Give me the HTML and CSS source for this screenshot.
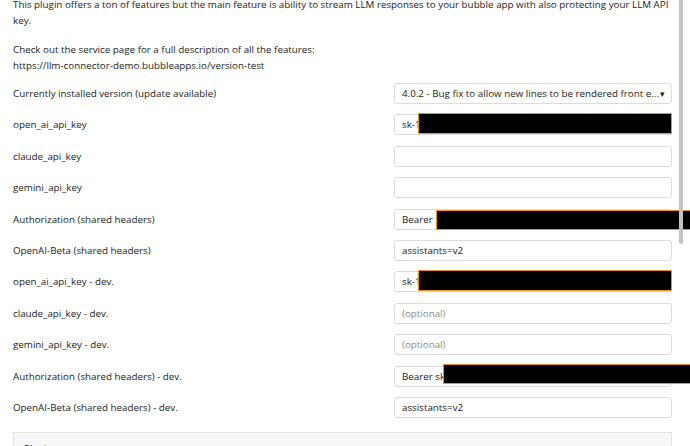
FILE: index.html
```html
<!DOCTYPE html>
<html>
<head>
<meta charset="utf-8">
<link rel="stylesheet" href="styles.css">
</head>
<body>
<div class="page">
  <p class="desc">This plugin offers a ton of features but the main feature is ability to stream LLM responses to your bubble app with also protecting your LLM API key.</p>
  <p class="desc">Check out the service page for a full description of all the features:<br>https://llm-connector-demo.bubbleapps.io/version-test</p>

  <div class="form">
    <div class="label">Currently installed version (update available)</div>
    <div class="field"><div class="select"><span class="sel-text">4.0.2 - Bug fix to allow new lines to be rendered front e...</span><span class="caret">▾</span></div></div>

    <div class="label">open_ai_api_key</div>
    <div class="field"><div class="input">sk-1</div><div class="redact r-key"></div></div>

    <div class="label">claude_api_key</div>
    <div class="field"><div class="input"></div></div>

    <div class="label">gemini_api_key</div>
    <div class="field"><div class="input"></div></div>

    <div class="label">Authorization (shared headers)</div>
    <div class="field"><div class="input">Bearer s</div><div class="redact r-auth"></div></div>

    <div class="label">OpenAI-Beta (shared headers)</div>
    <div class="field"><div class="input">assistants=v2</div></div>

    <div class="label">open_ai_api_key - dev.</div>
    <div class="field"><div class="input">sk-1</div><div class="redact r-key"></div></div>

    <div class="label">claude_api_key - dev.</div>
    <div class="field"><div class="input placeholder">(optional)</div></div>

    <div class="label">gemini_api_key - dev.</div>
    <div class="field"><div class="input placeholder">(optional)</div></div>

    <div class="label">Authorization (shared headers) - dev.</div>
    <div class="field"><div class="input">Bearer sk</div><div class="redact r-auth-dev"></div></div>

    <div class="label">OpenAI-Beta (shared headers) - dev.</div>
    <div class="field"><div class="input">assistants=v2</div></div>
  </div>

  <div class="contents">Plugin contents</div>
</div>
<div class="scroll-thumb"></div>
</body>
</html>
```

FILE: styles.css
```css
html, body {
  margin: 0;
  padding: 0;
  overflow: hidden;
  background: #fff;
}
body {
  font-family: "Open Sans", "Liberation Sans", sans-serif;
  font-size: 9.8px;
  color: #222;
}
.page {
  width: 659px;
  padding-left: 13px;
  margin-top: -3px;
}
.desc {
  margin: 0 0 13px 0;
  line-height: 16px;
  width: 664px;
}
.form {
  display: grid;
  grid-template-columns: 381px 278px;
  row-gap: 10.4px;
  margin-top: -4px;
}
.label {
  display: flex;
  align-items: center;
  height: 21px;
}
.field {
  position: relative;
  height: 21px;
}
.input, .select {
  box-sizing: border-box;
  height: 21px;
  border: 1px solid #dcdcdc;
  border-radius: 3px;
  padding: 0 7px;
  display: flex;
  align-items: center;
  background: #fff;
  white-space: nowrap;
  overflow: hidden;
}
.placeholder {
  color: #8a8a8a;
}
.select {
  padding-right: 5px;
}
.sel-text {
  white-space: nowrap;
  overflow: hidden;
}
.caret {
  font-size: 9px;
  margin-left: 1px;
}
.redact {
  position: absolute;
  box-sizing: border-box;
  background: #000;
  border: 1.5px solid #f3901c;
}
.r-key {
  left: 24px;
  top: -1px;
  width: 254px;
  height: 21px;
}
.r-auth {
  left: 42px;
  top: 1px;
  width: 260px;
  height: 20px;
}
.r-auth-dev {
  left: 49px;
  top: -1.5px;
  width: 260px;
  height: 20px;
}
.contents {
  box-sizing: border-box;
  margin-top: 14px;
  border: 1px solid #e3e3e3;
  background: #f7f7f7;
  padding: 9px 10px;
  height: 40px;
}
.scroll-thumb {
  position: fixed;
  top: 0;
  left: 679px;
  width: 4px;
  height: 244px;
  background: #c3c3c3;
  border-radius: 0 0 2px 2px;
}
```
